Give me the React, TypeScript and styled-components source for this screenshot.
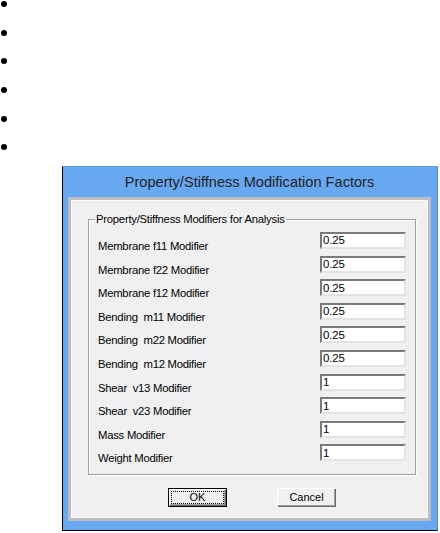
import React from "react";
import styled, { createGlobalStyle } from "styled-components";

const GlobalStyle = createGlobalStyle`
  html, body {
    margin: 0;
    padding: 0;
    background: #ffffff;
  }
  body {
    font-family: "Liberation Sans", Arial, sans-serif;
  }
`;

const Page = styled.div`
  width: 440px;
  height: 533px;
  overflow: hidden;
`;

const Bullets = styled.ul`
  list-style: none;
  margin: 0;
  padding: 1px 0 0 1px;
  display: flex;
  flex-direction: column;
  gap: 22.7px;
`;

const Bullet = styled.li`
  width: 6px;
  height: 6px;
  border-radius: 50%;
  background: #000;
`;

const Window = styled.div`
  margin: 15.5px 0 0 62px;
  width: 376px;
  box-sizing: border-box;
  background: #68a8f0;
  border-left: 1px solid #000;
  border-right: 1px solid #4f8ed6;
  border-top: 1px solid #5d9ce4;
  border-bottom: 1px solid #000;
  padding: 0 6px 9px 5px;
  display: flex;
  flex-direction: column;
`;

const TitleBar = styled.div`
  height: 30px;
  display: flex;
  align-items: center;
  justify-content: center;
  font-size: 14.6px;
  color: #1f1f1f;
`;

const Body = styled.div`
  background: #f0f0f0;
  border: 3px solid #bdbdbd;
  box-shadow: inset 0 0 0 1px #fbfbfb;
  padding: 13px 12px 11px 17px;
  display: flex;
  flex-direction: column;
  font-size: 11.3px;
  letter-spacing: -0.25px;
  color: #000;
`;

const Group = styled.fieldset`
  margin: 0;
  padding: 6px 9px 6px 9px;
  min-width: 0;
  border: 1px solid #a0a0a0;
  box-shadow: 1px 1px 0 #fff, inset 1px 1px 0 #fff;
`;

const Legend = styled.legend`
  margin-left: -3px;
  padding: 0 1px;
  line-height: 13px;
`;

const Rows = styled.div`
  display: grid;
  grid-template-columns: 1fr 86px;
  grid-auto-rows: 23.6px;
`;

const Label = styled.span`
  padding-top: 8px;
  line-height: 13px;
  white-space: pre;
`;

const Field = styled.input`
  width: 86px;
  height: 17px;
  box-sizing: border-box;
  margin: 0;
  padding: 0 1px;
  background: #fff;
  border: 2px solid;
  border-color: #7a7a7a #e3e3e3 #e3e3e3 #7a7a7a;
  font-family: "Liberation Sans", Arial, sans-serif;
  font-size: 11.5px;
  letter-spacing: -0.2px;
  color: #000;
  outline: none;
`;

const Buttons = styled.div`
  display: flex;
  justify-content: center;
  gap: 50px;
  margin-top: 13px;
`;

const Button = styled.button<{ $default?: boolean }>`
  width: 59px;
  height: 19px;
  box-sizing: border-box;
  margin: 0;
  padding: ${(p) => (p.$default ? "2px" : "0")};
  background: #f0f0f0;
  font-family: "Liberation Sans", Arial, sans-serif;
  font-size: 11px;
  color: #000;
  display: flex;
  align-items: stretch;
  justify-content: center;
  border: ${(p) => (p.$default ? "1px solid #000" : "none")};
  box-shadow: inset 1px 1px 0 #fff, inset -1px -1px 0 #696969,
    inset -2px -2px 0 #a0a0a0;
`;

const Focus = styled.span`
  flex: 1;
  display: flex;
  align-items: center;
  justify-content: center;
  border: 1px dotted #000;
  line-height: 11px;
`;

const Caption = styled.span`
  align-self: center;
`;

const modifiers: [string, string][] = [
  ["Membrane f11 Modifier", "0.25"],
  ["Membrane f22 Modifier", "0.25"],
  ["Membrane f12 Modifier", "0.25"],
  ["Bending  m11 Modifier", "0.25"],
  ["Bending  m22 Modifier", "0.25"],
  ["Bending  m12 Modifier", "0.25"],
  ["Shear  v13 Modifier", "1"],
  ["Shear  v23 Modifier", "1"],
  ["Mass Modifier", "1"],
  ["Weight Modifier", "1"],
];

const App: React.FC = () => {
  return (
    <Page>
      <GlobalStyle />
      <Bullets>
        {Array.from({ length: 6 }).map((_, i) => (
          <Bullet key={i} />
        ))}
      </Bullets>
      <Window>
        <TitleBar>Property/Stiffness Modification Factors</TitleBar>
        <Body>
          <Group>
            <Legend>Property/Stiffness Modifiers for Analysis</Legend>
            <Rows>
              {modifiers.map(([label, value]) => (
                <React.Fragment key={label}>
                  <Label>{label}</Label>
                  <Field value={value} readOnly />
                </React.Fragment>
              ))}
            </Rows>
          </Group>
          <Buttons>
            <Button $default>
              <Focus>OK</Focus>
            </Button>
            <Button>
              <Caption>Cancel</Caption>
            </Button>
          </Buttons>
        </Body>
      </Window>
    </Page>
  );
};

export default App;
